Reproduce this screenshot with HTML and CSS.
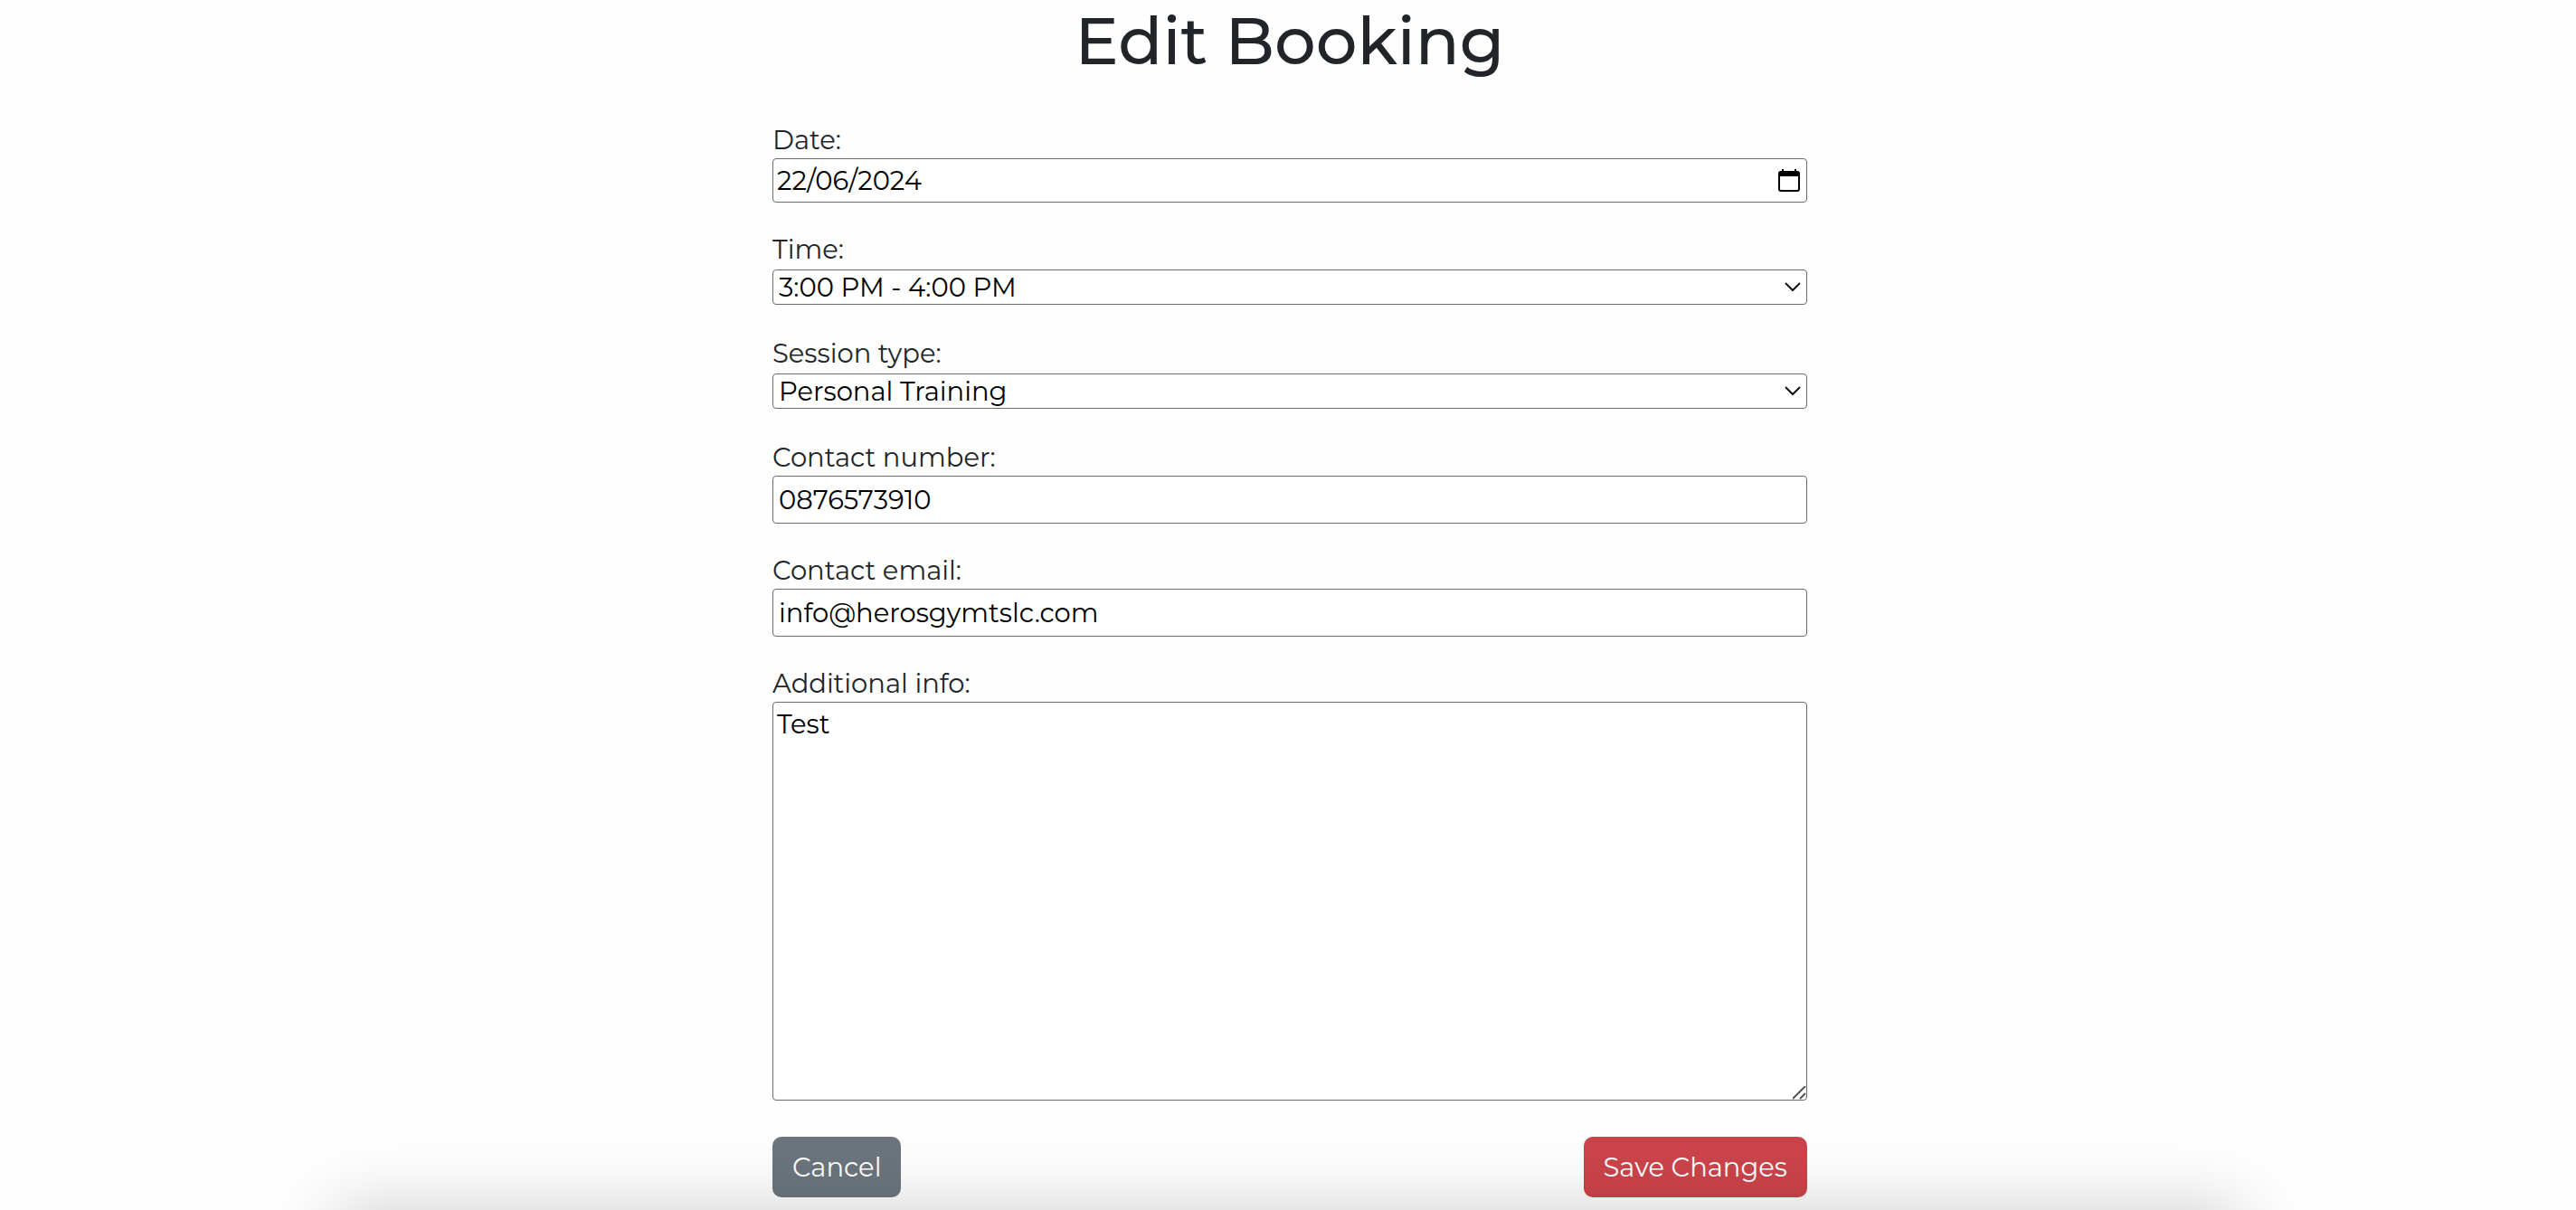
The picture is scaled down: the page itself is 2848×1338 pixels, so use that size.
FILE: index.html
```html
<!DOCTYPE html>
<html lang="en-GB">
<head>
<meta charset="utf-8">
<meta name="viewport" content="width=device-width, initial-scale=1">
<title>Edit Booking</title>
<link rel="stylesheet" href="styles.css">
</head>
<body>
<main class="page">
  <h1 class="page-title">Edit Booking</h1>
  <form class="booking-form">
    <div class="field">
      <label class="field-label" for="date">Date:</label>
      <div class="control-wrap">
        <input class="control control-date" id="date" name="date" type="text" value="22/06/2024">
        <button class="date-picker" type="button" aria-label="Choose date">
          <svg class="calendar-icon" viewBox="0 0 24 26" aria-hidden="true"><path fill="currentColor" fill-rule="evenodd" d="M4 0h2v2h12V0h2v2h1a3 3 0 0 1 3 3v17a3 3 0 0 1-3 3H3a3 3 0 0 1-3-3V5a3 3 0 0 1 3-3h1zM2 8v14a1 1 0 0 0 1 1h18a1 1 0 0 0 1-1V8z"/></svg>
        </button>
      </div>
    </div>
    <div class="field">
      <label class="field-label" for="time">Time:</label>
      <div class="control-wrap select-wrap">
        <select class="control control-select" id="time" name="time"><option>3:00 PM - 4:00 PM</option></select>
        <svg class="chevron" viewBox="0 0 18 11" aria-hidden="true"><path d="M1 1l8 8 8-8"/></svg>
      </div>
    </div>
    <div class="field">
      <label class="field-label" for="session">Session type:</label>
      <div class="control-wrap select-wrap">
        <select class="control control-select" id="session" name="session"><option>Personal Training</option></select>
        <svg class="chevron" viewBox="0 0 18 11" aria-hidden="true"><path d="M1 1l8 8 8-8"/></svg>
      </div>
    </div>
    <div class="field">
      <label class="field-label" for="phone">Contact number:</label>
      <input class="control control-text" id="phone" name="phone" type="tel" value="0876573910">
    </div>
    <div class="field">
      <label class="field-label" for="email">Contact email:</label>
      <input class="control control-text" id="email" name="email" type="email" value="info@herosgymtslc.com">
    </div>
    <div class="field">
      <label class="field-label" for="info">Additional info:</label>
      <textarea class="control control-area" id="info" name="info" rows="10" spellcheck="false">Test</textarea>
    </div>
    <div class="actions">
      <button class="btn btn-secondary" type="button">Cancel</button>
      <button class="btn btn-danger" type="submit">Save Changes</button>
    </div>
  </form>
</main>
<div class="bottom-shadow" aria-hidden="true"></div>
</body>
</html>
```
FILE: styles.css
```css
*, *::before, *::after { box-sizing: border-box; }

body {
  margin: 0;
  padding-left: 4px;
  background: #fefefe;
  color: #212529;
  font-family: Montserrat, Inter, sans-serif;
  font-size: 29px;
  line-height: 44px;
}

.page {
  max-width: 1144px;
  margin: 0 auto;
  padding-bottom: 14px;
}

.page-title {
  margin: 0 0 45px;
  font-size: 72px;
  font-weight: 500;
  line-height: 90px;
  text-align: center;
}

.booking-form {
  display: flex;
  flex-direction: column;
  gap: 32px;
}

.field {
  display: flex;
  flex-direction: column;
}

.field-label { line-height: 40px; }

.control-wrap { display: grid; align-items: center; }
.control-wrap > * { grid-area: 1 / 1; }
.select-wrap { margin: 2px 0; }

.control {
  width: 100%;
  margin: 0;
  border: 1px solid #6b6b6b;
  border-radius: 4px;
  background: #fff;
  color: #000;
  font-family: inherit;
  font-size: 29px;
  line-height: 44px;
}

.control-date { height: 49px; padding: 0 48px 0 4px; }
.control-select { height: 39px; padding: 0 32px 0 6px; line-height: 36px; appearance: none; }
.control-text { height: 53px; padding: 0 6px; }
.control-area { display: block; height: 441px; padding: 2px 4px; resize: vertical; }

.control-area::-webkit-resizer {
  background: url("data:image/svg+xml,%3Csvg xmlns='http://www.w3.org/2000/svg' width='15' height='15'%3E%3Cpath d='M0 14L14 0M8 14L14 8' stroke='%23555' stroke-width='2'/%3E%3C/svg%3E") no-repeat 0 0;
}

.date-picker {
  justify-self: end;
  display: flex;
  margin-right: 8px;
  padding: 0;
  border: 0;
  background: none;
  color: #000;
}

.calendar-icon { width: 24px; height: 26px; }

.chevron {
  justify-self: end;
  width: 18px;
  height: 11px;
  margin-right: 7px;
  fill: none;
  stroke: #111;
  stroke-width: 2;
  pointer-events: none;
}

.actions {
  display: flex;
  justify-content: space-between;
  margin-top: 8px;
}

.btn {
  height: 67px;
  padding: 0 22px;
  border: 0;
  border-radius: 10px;
  color: #fff;
  font-family: inherit;
  font-size: 29px;
  line-height: 44px;
}

.btn-secondary { background: #6c757d; }
.btn-danger { background: #cc444b; }

.bottom-shadow {
  position: fixed;
  top: 100%;
  left: 13%;
  right: 13%;
  height: 200px;
  box-shadow: 0 0 80px rgba(0, 0, 0, 0.2);
  pointer-events: none;
}
```
